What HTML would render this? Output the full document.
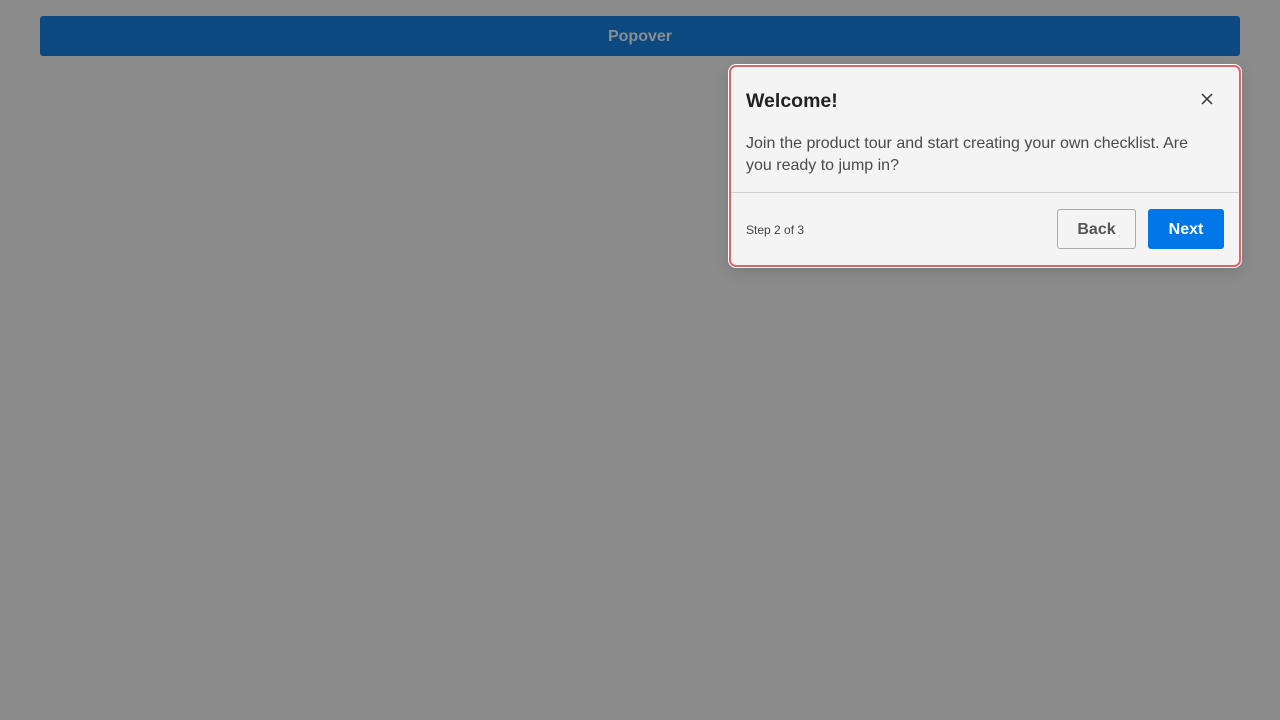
<!DOCTYPE html>
<html><head><style>
body{margin:0;width:1280px;height:720px;background:#8b8b8b;font-family:"Liberation Sans",Arial,sans-serif;position:relative;overflow:hidden}
.bar{position:absolute;left:40px;top:16px;width:1200px;height:40px;background:#0c4980;border-radius:3px;color:#8d8d8d;font-weight:bold;font-size:16px;text-align:center;line-height:42px}
.pop{position:absolute;left:729px;top:65px;width:508px;height:198px;border:2px solid #d8676b;border-radius:7px;background:#f4f4f4;box-shadow:0 0 0 1px #fff,0 4px 14px rgba(0,0,0,.15)}
.t{position:absolute;left:15px;top:23px;font-size:19.5px;font-weight:bold;color:#222}
.x{position:absolute;left:469px;top:25px}
.d{position:absolute;left:15px;top:66px;width:470px;font-size:16px;line-height:22px;color:#4a4a4a}
.hr{position:absolute;left:0;right:0;top:125px;border-top:1px solid #cfcfcf}
.s{position:absolute;left:15px;top:156px;font-size:12px;color:#444}
.b{position:absolute;top:142px;height:40px;box-sizing:border-box;border-radius:3px;font-size:16px;font-weight:bold;text-align:center;line-height:40px}
.back{left:326px;width:79px;border:1px solid #aaa;color:#555;background:#f4f4f4}
.next{left:417px;width:76px;background:#0077e6;color:#fff;border:1px solid #0077e6}
</style></head><body>
<div class="bar">Popover</div>
<div class="pop">
<div class="t">Welcome!</div>
<svg class="x" width="14" height="14" viewBox="0 0 14 14"><path d="M2 2L12 12M12 2L2 12" stroke="#333" stroke-width="1.5"/></svg>
<div class="d">Join the product tour and start creating your own checklist. Are you ready to jump in?</div>
<div class="hr"></div>
<div class="s">Step 2 of 3</div>
<div class="b back">Back</div>
<div class="b next">Next</div>
</div>
</body></html>
